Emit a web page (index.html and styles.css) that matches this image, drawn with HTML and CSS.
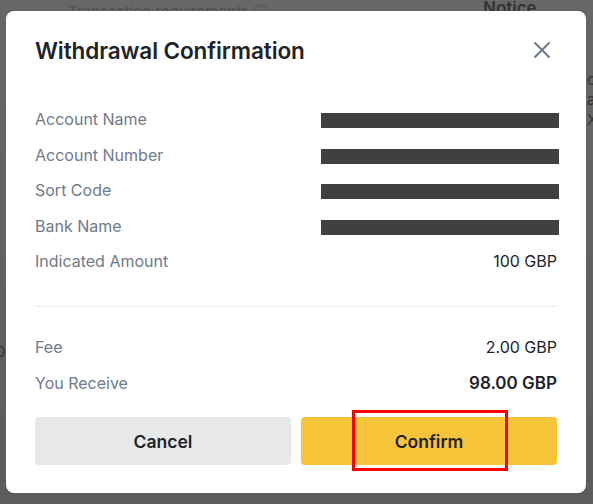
FILE: index.html
```html
<!DOCTYPE html>
<html>
<head>
<meta charset="utf-8">
<link rel="stylesheet" href="styles.css">
</head>
<body>
<div class="page">
  <div class="bg-req">Transaction requirements ⓘ</div>
  <div class="bg-notice">Notice</div>
  <div class="bg-side">o<br>a<br>X</div>
  <div class="bg-left">0</div>
</div>
<div class="modal">
  <div class="header">
    <div class="title">Withdrawal Confirmation</div>
    <svg class="close" width="18" height="18" viewBox="0 0 18 18"><path d="M2 2 L16 16 M16 2 L2 16" stroke="#707a8a" stroke-width="2" stroke-linecap="round" fill="none"/></svg>
  </div>
  <div class="rows">
    <div class="row"><span class="label">Account Name</span><span class="bar"></span></div>
    <div class="row"><span class="label">Account Number</span><span class="bar"></span></div>
    <div class="row"><span class="label">Sort Code</span><span class="bar"></span></div>
    <div class="row"><span class="label">Bank Name</span><span class="bar"></span></div>
    <div class="row"><span class="label">Indicated Amount</span><span class="value">100 GBP</span></div>
  </div>
  <div class="divider"></div>
  <div class="rows rows-fee">
    <div class="row"><span class="label">Fee</span><span class="value">2.00 GBP</span></div>
    <div class="row"><span class="label">You Receive</span><span class="value strong">98.00 GBP</span></div>
  </div>
  <div class="buttons">
    <div class="btn cancel">Cancel</div>
    <div class="btn confirm">Confirm<span class="highlight"></span></div>
  </div>
</div>
</body>
</html>
```
FILE: styles.css
```css
html, body {
  margin: 0;
  padding: 0;
}
body {
  width: 593px;
  height: 504px;
  background: linear-gradient(#676767, #5c5c5c);
  font-family: "Inter", "Roboto", sans-serif;
  position: relative;
  overflow: hidden;
}
.page {
  position: absolute;
  inset: 0;
  color: #4a4a4a;
}
.bg-req {
  position: absolute;
  left: 68px;
  top: 2px;
  font-size: 15px;
  color: #505050;
}
.bg-notice {
  position: absolute;
  left: 483px;
  top: -2px;
  font-size: 17px;
  font-weight: 600;
  color: #333;
}
.bg-side {
  position: absolute;
  left: 587px;
  top: 70px;
  font-size: 15px;
  line-height: 20px;
  color: #333;
}
.bg-left {
  position: absolute;
  left: -4px;
  top: 342px;
  font-size: 15px;
  color: #333;
}
.modal {
  position: absolute;
  left: 6px;
  top: 11px;
  width: 580px;
  height: 482px;
  box-sizing: border-box;
  background: #fff;
  border-radius: 8px;
  padding: 24px 29px 28px 29px;
  display: flex;
  flex-direction: column;
}
.header {
  display: flex;
  justify-content: space-between;
  align-items: center;
  height: 30px;
}
.title {
  font-size: 22.5px;
  font-weight: 600;
  color: #1e2329;
  letter-spacing: -0.1px;
}
.close {
  margin-right: 6px;
}
.rows {
  display: flex;
  flex-direction: column;
  gap: 15.5px;
  margin-top: 44px;
}
.row {
  display: flex;
  justify-content: space-between;
  align-items: center;
  height: 20px;
}
.label {
  font-size: 16px;
  color: #707a8a;
}
.value {
  font-size: 16px;
  color: #1e2329;
}
.value.strong {
  font-size: 17px;
  font-weight: 600;
}
.bar {
  display: block;
  width: 238px;
  height: 15px;
  background: #404040;
  margin-right: -2px;
  margin-top: 3px;
}
.divider {
  height: 1px;
  background: #eaecef;
  margin-top: 35px;
}
.rows-fee {
  margin-top: 30px;
  gap: 16px;
}
.buttons {
  display: flex;
  gap: 10px;
  margin-top: 24px;
}
.btn {
  flex: 1;
  height: 48px;
  border-radius: 4px;
  display: flex;
  align-items: center;
  justify-content: center;
  font-size: 17.5px;
  font-weight: 600;
  color: #1e2329;
  position: relative;
}
.cancel {
  background: #e6e8ea;
}
.confirm {
  background: #f8c53a;
}
.highlight {
  position: absolute;
  left: 51px;
  top: -7px;
  width: 156px;
  height: 61px;
  box-sizing: border-box;
  border: 3px solid #ff0000;
}
```
